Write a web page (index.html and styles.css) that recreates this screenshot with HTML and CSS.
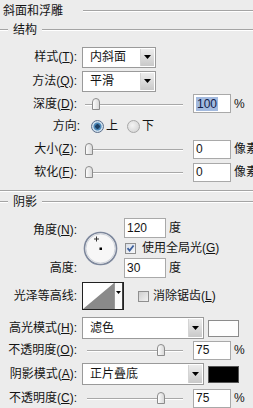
FILE: index.html
```html
<!DOCTYPE html>
<html lang="zh">
<head>
<meta charset="utf-8">
<title>斜面和浮雕</title>
<link rel="stylesheet" href="styles.css">
</head>
<body>
<div class="panel">
  <div class="title"><span>斜面和浮雕</span><i class="rule gapL"></i></div>

  <section class="group g1">
    <div class="ghead"><i class="rule lead"></i><span class="gtitle">结构</span><i class="rule"></i></div>

    <div class="row h24">
      <span class="lab">样式(<u>T</u>):</span>
      <div class="select w74"><span class="val">内斜面</span><span class="btn"><svg width="7" height="4" viewBox="0 0 7 4"><path d="M0 0H7L3.5 4Z" fill="#000"/></svg></span></div>
    </div>
    <div class="row h24">
      <span class="lab">方法(<u>Q</u>):</span>
      <div class="select w74"><span class="val">平滑</span><span class="btn"><svg width="7" height="4" viewBox="0 0 7 4"><path d="M0 0H7L3.5 4Z" fill="#000"/></svg></span></div>
    </div>
    <div class="row h21">
      <span class="lab">深度(<u>D</u>):</span>
      <svg class="slider" width="98" height="14" viewBox="0 0 98 14"><defs><linearGradient id="tg" x1="0" y1="0" x2="1" y2="0"><stop offset="0" stop-color="#ffffff"/><stop offset="1" stop-color="#d6d6d6"/></linearGradient></defs><line x1="0" y1="7.5" x2="98" y2="7.5" stroke="#a8a8a8"/><line x1="0" y1="8.5" x2="98" y2="8.5" stroke="#ffffff"/><path d="M7.5 12.5V5Q7.5 1.5 11 1.5Q14.5 1.5 14.5 5V12.5Z" fill="url(#tg)" stroke="#8c8c8c"/></svg>
      <span class="field"><span class="sel">100</span></span>
      <span class="unit">%</span>
    </div>
    <div class="row h24">
      <span class="lab dir">方向:</span>
      <span class="radio on"></span><span class="rtext">上</span>
      <span class="radio off"></span><span class="rtext">下</span>
    </div>
    <div class="row h22">
      <span class="lab">大小(<u>Z</u>):</span>
      <svg class="slider" width="98" height="14" viewBox="0 0 98 14"><line x1="0" y1="7.5" x2="98" y2="7.5" stroke="#a8a8a8"/><line x1="0" y1="8.5" x2="98" y2="8.5" stroke="#ffffff"/><path d="M0.5 12.5V5Q0.5 1.5 4 1.5Q7.5 1.5 7.5 5V12.5Z" fill="url(#tg)" stroke="#8c8c8c"/></svg>
      <span class="field">0</span>
      <span class="unit">像素</span>
    </div>
    <div class="row h24">
      <span class="lab">软化(<u>F</u>):</span>
      <svg class="slider" width="98" height="14" viewBox="0 0 98 14"><line x1="0" y1="7.5" x2="98" y2="7.5" stroke="#a8a8a8"/><line x1="0" y1="8.5" x2="98" y2="8.5" stroke="#ffffff"/><path d="M0.5 12.5V5Q0.5 1.5 4 1.5Q7.5 1.5 7.5 5V12.5Z" fill="url(#tg)" stroke="#8c8c8c"/></svg>
      <span class="field">0</span>
      <span class="unit">像素</span>
    </div>
  </section>

  <section class="group g2">
    <div class="ghead"><i class="rule lead"></i><span class="gtitle">阴影</span><i class="rule"></i></div>

    <div class="angle">
      <span class="lab a-lab">角度(<u>N</u>):</span>
      <svg class="dial" width="37" height="37" viewBox="0 0 37 37">
        <circle cx="18.5" cy="18.5" r="17" fill="#dfe2e8"/>
        <circle cx="18.5" cy="18.5" r="16" fill="#f7f7f7" stroke="#7d879b" stroke-width="1.6"/>
        <circle cx="18.5" cy="18.5" r="14.6" fill="none" stroke="#cfd3da" stroke-width="1"/>
        <path d="M14.5 6.5V11.5M12 9H17" stroke="#333" stroke-width="1"/>
        <rect x="17.5" y="17.5" width="2.5" height="2.5" fill="#000"/>
      </svg>
      <span class="field f42 a-in">120</span><span class="unit a-u">度</span>
      <span class="check on a-chk"><svg width="9" height="9" viewBox="0 0 9 9"><path d="M1.5 4.2L3.6 6.5L7.6 1.5" fill="none" stroke="#3d5f9c" stroke-width="1.8"/></svg></span><span class="ctext a-ct">使用全局光(<u>G</u>)</span>
      <span class="lab h-lab">高度:</span>
      <span class="field f42 h-in">30</span><span class="unit h-u">度</span>
    </div>

    <div class="row h28 contour-row">
      <span class="lab">光泽等高线:</span>
      <span class="contour">
        <svg width="31" height="26" viewBox="0 0 31 26"><rect width="31" height="26" fill="#fff"/><path d="M0 26L31 0V26Z" fill="#8a8a8a"/></svg>
        <span class="cbtn"><svg width="5" height="3" viewBox="0 0 5 3"><path d="M0 0H5L2.5 3Z" fill="#000"/></svg></span>
      </span>
      <span class="check off"></span><span class="ctext">消除锯齿(<u>L</u>)</span>
    </div>

    <div class="row h24 mt6">
      <span class="lab">高光模式(<u>H</u>):</span>
      <div class="select w122 h22s"><span class="val">滤色</span><span class="btn"><svg width="7" height="4" viewBox="0 0 7 4"><path d="M0 0H7L3.5 4Z" fill="#000"/></svg></span></div>
      <span class="swatch white"></span>
    </div>
    <div class="row h20">
      <span class="lab">不透明度(<u>O</u>):</span>
      <svg class="slider s2" width="96" height="14" viewBox="0 0 96 14"><line x1="0" y1="7.5" x2="96" y2="7.5" stroke="#a8a8a8"/><line x1="0" y1="8.5" x2="96" y2="8.5" stroke="#ffffff"/><path d="M70.5 12.5V5Q70.5 1.5 74 1.5Q77.5 1.5 77.5 5V12.5Z" fill="url(#tg)" stroke="#8c8c8c"/></svg>
      <span class="field">75</span>
      <span class="unit">%</span>
    </div>
    <div class="row h28">
      <span class="lab">阴影模式(<u>A</u>):</span>
      <div class="select w122 h22s"><span class="val">正片叠底</span><span class="btn"><svg width="7" height="4" viewBox="0 0 7 4"><path d="M0 0H7L3.5 4Z" fill="#000"/></svg></span></div>
      <span class="swatch black"></span>
    </div>
    <div class="row h20">
      <span class="lab">不透明度(<u>C</u>):</span>
      <svg class="slider s2" width="96" height="14" viewBox="0 0 96 14"><line x1="0" y1="7.5" x2="96" y2="7.5" stroke="#a8a8a8"/><line x1="0" y1="8.5" x2="96" y2="8.5" stroke="#ffffff"/><path d="M70.5 12.5V5Q70.5 1.5 74 1.5Q77.5 1.5 77.5 5V12.5Z" fill="url(#tg)" stroke="#8c8c8c"/></svg>
      <span class="field">75</span>
      <span class="unit">%</span>
    </div>
  </section>
</div>
</body>
</html>
```

FILE: styles.css
```css
html, body {
  margin: 0;
  padding: 0;
  background: #ececec;
}
body {
  width: 253px;
  height: 408px;
  overflow: hidden;
  font-family: "Liberation Sans", "Noto Sans CJK SC", sans-serif;
  font-size: 12px;
  color: #141414;
}
.panel {
  width: 253px;
}
u {
  text-decoration: underline;
  text-underline-offset: 1px;
}
.title {
  height: 21px;
  display: flex;
  align-items: center;
  padding-left: 3px;
  line-height: 14px;
}
.rule {
  display: block;
  flex: 1;
  height: 0;
  border-top: 1px solid #a4a4a4;
  border-bottom: 1px solid #ffffff;
}
.rule.gapL {
  margin-left: 20px;
}
.rule.lead {
  flex: 0 0 8px;
}
.ghead {
  height: 18px;
  display: flex;
  align-items: center;
  line-height: 14px;
}
.gtitle {
  margin: 0 5px;
}
.g1 {
  padding-bottom: 6px;
  border-bottom: 1px solid #a4a4a4;
  box-shadow: 0 1px 0 #ffffff;
}
.g1 .ghead + .row {
  margin-top: 6px;
}
.g2 {
  margin-top: 2px;
}
.row {
  display: flex;
  align-items: center;
  line-height: 14px;
  white-space: nowrap;
}
.h20 { height: 20px; }
.h21 { height: 21px; }
.h22 { height: 22px; }
.h24 { height: 24px; }
.h28 { height: 28px; }
.mt6 { margin-top: 6px; }
.lab {
  flex: 0 0 77px;
  width: 77px;
  text-align: right;
  margin-right: 5px;
}
.lab.dir {
  flex-basis: 80px;
  width: 80px;
  margin-right: 11px;
}
.select {
  box-sizing: border-box;
  height: 21px;
  border: 1px solid #9a9a9a;
  background: #ffffff;
  display: flex;
  align-items: stretch;
}
.select.w74 { width: 74px; }
.select.w122 { width: 122px; }
.select.h22s { height: 22px; }
.val {
  flex: 1;
  padding-left: 7px;
  display: flex;
  align-items: center;
}
.btn {
  width: 14px;
  margin: 1px;
  box-sizing: border-box;
  border-left: 1px solid #d4d4d4;
  background: linear-gradient(#ededed, #c9c9c9);
  display: flex;
  align-items: center;
  justify-content: center;
}
.slider {
  display: block;
  margin-left: 3px;
  flex: 0 0 auto;
}
.slider.s2 {
  margin-left: 5px;
}
.field {
  box-sizing: border-box;
  width: 38px;
  height: 19px;
  margin-left: 10px;
  border: 1px solid #a9a9a9;
  background: #ffffff;
  padding-left: 2px;
  display: flex;
  align-items: center;
  flex: 0 0 auto;
}
.sel {
  background: #a3badf;
  color: #10204a;
  padding: 0 1px;
}
.unit {
  margin-left: 3px;
}
.radio {
  box-sizing: border-box;
  width: 13px;
  height: 13px;
  border-radius: 50%;
  flex: 0 0 13px;
}
.radio.on {
  border: 1px solid #5b6e8a;
  background: radial-gradient(circle at 50% 50%, #1c3f63 0 2px, #4a86b6 2.5px 3.5px, #cfe0ee 4.5px);
}
.radio.off {
  border: 1px solid #a7a7a7;
  background: radial-gradient(circle at 40% 40%, #f4f4f4, #cfcfcf);
}
.rtext {
  margin-left: 2px;
  margin-right: 9px;
}
.angle {
  display: grid;
  grid-template-columns: 77px 5px 37px 5px 42px auto 1fr;
  grid-template-rows: 20px 20px 20px;
  padding-top: 7px;
  line-height: 14px;
  white-space: nowrap;
}
.angle .a-lab {
  grid-column: 1;
  grid-row: 1;
  align-self: center;
  padding-top: 4px;
  margin: 0;
}
.angle .h-lab {
  grid-column: 1;
  grid-row: 3;
  align-self: center;
  margin: 0;
}
.dial {
  grid-column: 3;
  grid-row: 1 / 4;
  align-self: center;
  display: block;
}
.angle .f42 {
  width: 42px;
  height: 20px;
  margin-left: 0;
}
.a-in { grid-column: 5; grid-row: 1; }
.h-in { grid-column: 5; grid-row: 3; }
.a-u { grid-column: 6; grid-row: 1; align-self: center; }
.h-u { grid-column: 6; grid-row: 3; align-self: center; }
.angle .a-chk {
  grid-column: 5;
  grid-row: 2;
  align-self: center;
  justify-self: start;
  margin-left: 1px;
  position: relative;
  z-index: 1;
}
.angle .a-ct {
  grid-column: 5 / 8;
  grid-row: 2;
  align-self: center;
  margin-left: 18px;
}
.check {
  box-sizing: border-box;
  width: 11px;
  height: 11px;
  border: 1px solid #8f8f8f;
  display: flex;
  align-items: center;
  justify-content: center;
}
.check.on {
  background: linear-gradient(135deg, #d9dfe8, #f7f8fa);
}
.check.off {
  background: linear-gradient(135deg, #cfcfcf, #f2f2f2);
  margin-left: 14px;
  flex: 0 0 11px;
}
.ctext {
  margin-left: 4px;
}
.contour-row {
  margin-top: 4px;
}
.contour {
  box-sizing: border-box;
  width: 42px;
  height: 28px;
  border: 1px solid #222;
  display: flex;
  background: #fff;
  flex: 0 0 auto;
}
.contour svg {
  display: block;
}
.cbtn {
  flex: 1;
  border-left: 1px solid #9a9a9a;
  border-right: 1px solid #444;
  display: flex;
  justify-content: center;
  padding-top: 8px;
  box-sizing: border-box;
  background: #fafafa;
}
.cbtn svg {
  display: block;
}
.swatch {
  box-sizing: border-box;
  width: 31px;
  height: 17px;
  margin-left: 4px;
  flex: 0 0 auto;
}
.swatch.white {
  background: #fdfdfd;
  border: 1px solid #8a8a8a;
}
.swatch.black {
  background: #000;
  border: 1px solid #555;
}
```
